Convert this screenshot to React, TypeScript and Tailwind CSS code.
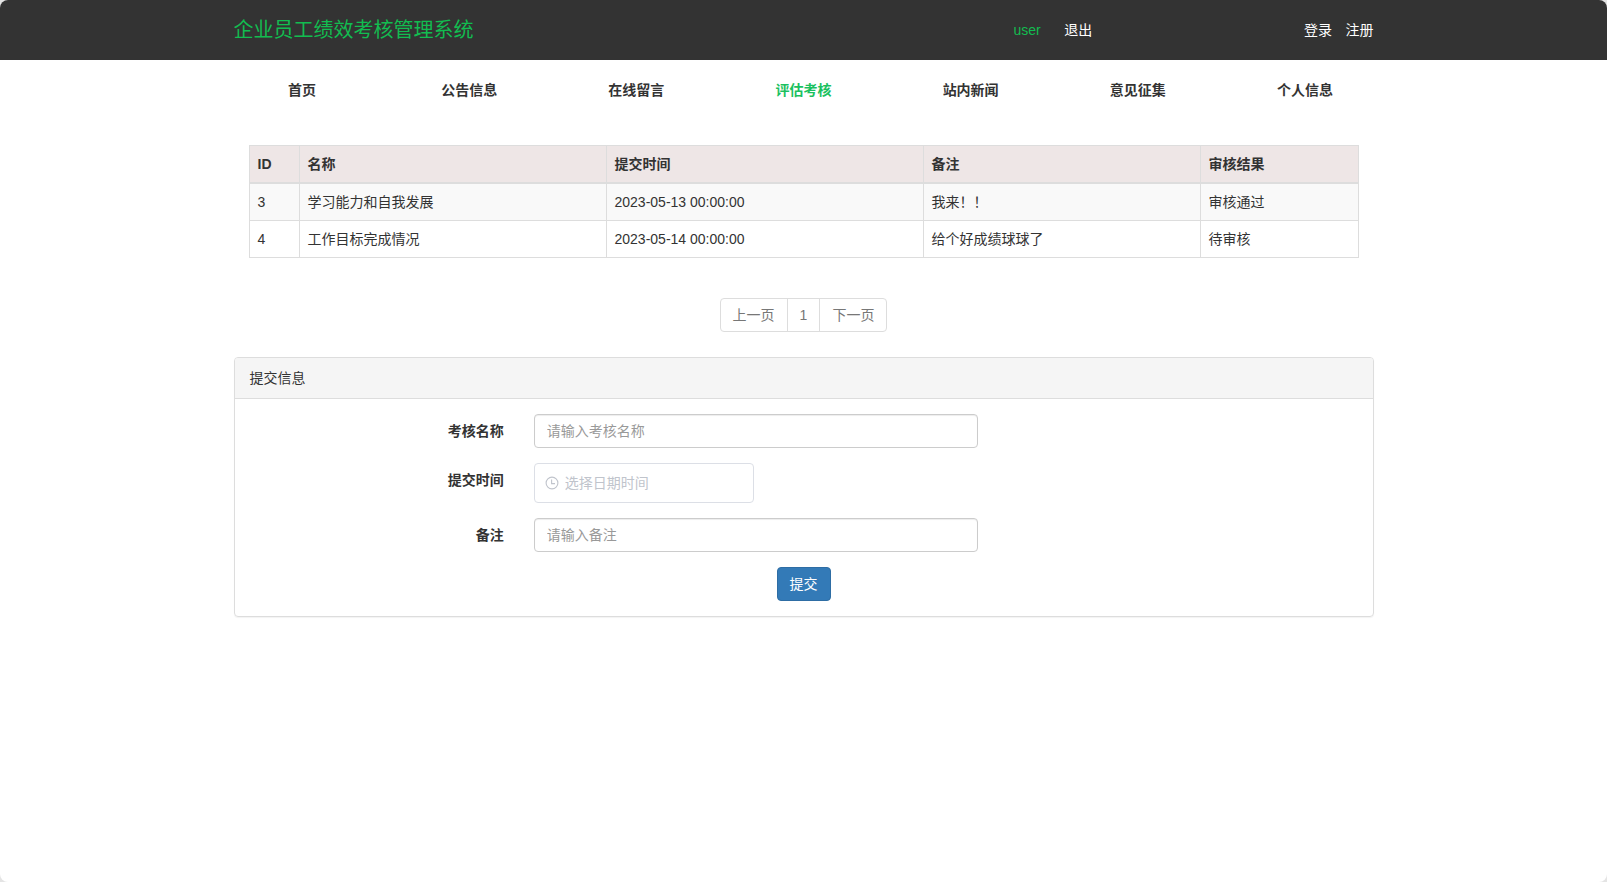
import { useState } from "react";
import clsx from "clsx";

const navItems = ["首页", "公告信息", "在线留言", "评估考核", "站内新闻", "意见征集", "个人信息"];

const rows = [
  { id: 3, name: "学习能力和自我发展", time: "2023-05-13 00:00:00", remark: "我来！！", result: "审核通过" },
  { id: 4, name: "工作目标完成情况", time: "2023-05-14 00:00:00", remark: "给个好成绩球球了", result: "待审核" },
];

const columns = [
  { title: "ID", width: "w-[50px]" },
  { title: "名称", width: "w-[307px]" },
  { title: "提交时间", width: "w-[317px]" },
  { title: "备注", width: "w-[277px]" },
  { title: "审核结果", width: "w-[158px]" },
];

const inputClass =
  "block h-[34px] w-[444px] rounded border border-[#ccc] px-3 text-sm leading-5 text-[#555] shadow-[inset_0_1px_1px_rgba(0,0,0,0.075)] outline-none placeholder:text-[#999] placeholder:opacity-100";

function ClockIcon() {
  return (
    <svg viewBox="0 0 14 14" className="size-[14px]" fill="none" stroke="#c0c4cc" strokeWidth="1.1">
      <circle cx="7" cy="7" r="5.9" />
      <path d="M6.6 3.6v4h3.4" />
    </svg>
  );
}

function Header() {
  return (
    <header className="h-[60px] bg-[#333]">
      <div className="mx-auto flex h-full w-[1140px] items-center text-white">
        <h1 className="w-[780px] text-xl font-normal text-[#12bc50]">企业员工绩效考核管理系统</h1>
        <div className="flex flex-1 gap-[23.5px]">
          <a href="#" className="text-[#12bc50]">user</a>
          <a href="#">退出</a>
        </div>
        <div className="flex gap-[13.5px]">
          <a href="#">登录</a>
          <a href="#">注册</a>
        </div>
      </div>
    </header>
  );
}

function Nav() {
  const [active, setActive] = useState("评估考核");
  return (
    <nav className="mx-auto grid h-[60px] w-[1170px] grid-cols-7">
      {navItems.map((item) => (
        <a
          key={item}
          href="#"
          onClick={() => setActive(item)}
          className={clsx(
            "flex items-center justify-center font-bold",
            active === item ? "text-[#1bc15f]" : "text-[#333]"
          )}
        >
          {item}
        </a>
      ))}
    </nav>
  );
}

function RecordTable() {
  return (
    <table className="mx-auto w-[1109px] table-fixed border-collapse border border-[#ddd] text-left">
      <thead>
        <tr className="h-[37px] bg-[#eee6e6]">
          {columns.map((col) => (
            <th key={col.title} className={clsx("border border-b-2 border-[#ddd] px-2 font-bold", col.width)}>
              {col.title}
            </th>
          ))}
        </tr>
      </thead>
      <tbody>
        {rows.map((row) => (
          <tr key={row.id} className="h-[37px] odd:h-[38px] odd:bg-[#f9f9f9]">
            {Object.values(row).map((value, i) => (
              <td key={i} className="border border-[#ddd] px-2">
                {value}
              </td>
            ))}
          </tr>
        ))}
      </tbody>
    </table>
  );
}

function Pagination() {
  return (
    <div className="mt-10 flex justify-center">
      <div className="flex h-[34px] divide-x divide-[#ddd] overflow-hidden rounded border border-[#ddd] text-[#777]">
        <button className="px-3">上一页</button>
        <button className="px-3">1</button>
        <button className="px-3">下一页</button>
      </div>
    </div>
  );
}

function SubmitPanel() {
  return (
    <section className="mx-auto mt-[25px] h-[260px] w-[1140px] rounded border border-[#ddd] shadow-[0_1px_1px_rgba(0,0,0,0.05)]">
      <div className="flex h-[41px] items-center rounded-t-[3px] border-b border-[#ddd] bg-[#f5f5f5] px-[15px]">
        提交信息
      </div>
      <form className="flex flex-col gap-[15px] pt-[15px]" onSubmit={(e) => e.preventDefault()}>
        <div className="flex gap-[30px]">
          <label className="w-[269.25px] pt-[7px] text-right font-bold">考核名称</label>
          <input className={inputClass} placeholder="请输入考核名称" />
        </div>
        <div className="flex gap-[30px]">
          <label className="w-[269.25px] pt-[7px] text-right font-bold">提交时间</label>
          <div className="flex h-10 w-[220px] items-center gap-1.5 rounded border border-[#dcdfe6] px-[10px]">
            <ClockIcon />
            <input
              className="w-40 text-sm outline-none placeholder:text-[#c0c4cc] placeholder:opacity-100"
              placeholder="选择日期时间"
            />
          </div>
        </div>
        <div className="flex gap-[30px]">
          <label className="w-[269.25px] pt-[7px] text-right font-bold">备注</label>
          <input className={inputClass} placeholder="请输入备注" />
        </div>
        <button className="mx-auto h-[34px] w-[54px] rounded border border-[#2e6da4] bg-[#337ab7] text-white">
          提交
        </button>
      </form>
    </section>
  );
}

export default function App() {
  return (
    <div className="bg-[#e4e4e4]">
      <div className="h-[882px] overflow-hidden rounded-lg bg-white font-['Liberation_Sans','Noto_Sans_CJK_SC',sans-serif] text-sm leading-5 text-[#333]">
        <Header />
        <Nav />
        <main className="pt-[25px]">
          <RecordTable />
          <Pagination />
          <SubmitPanel />
        </main>
      </div>
    </div>
  );
}
